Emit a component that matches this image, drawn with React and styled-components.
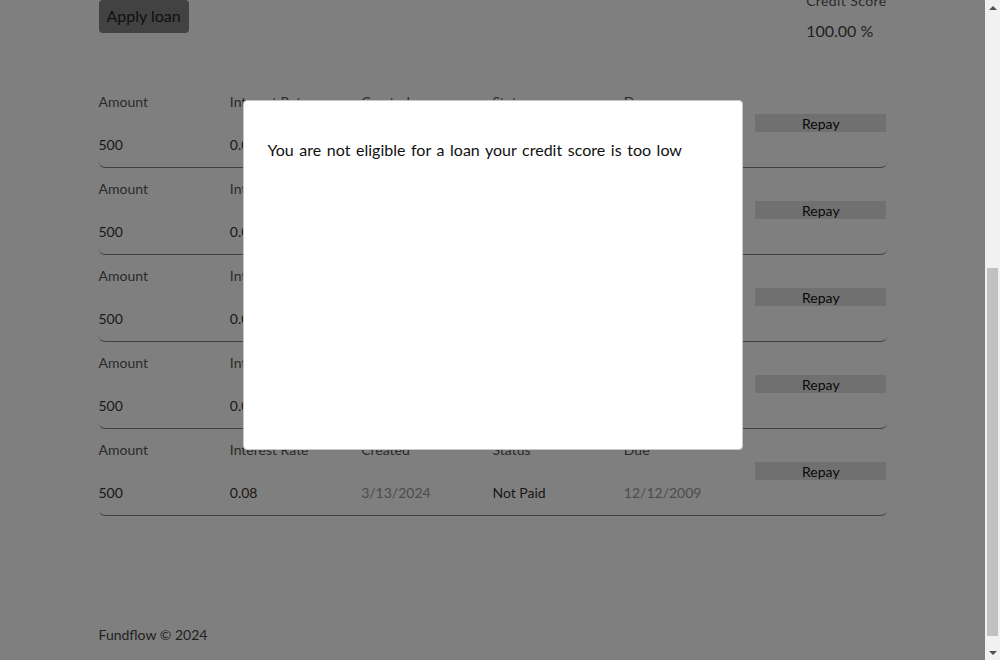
import { useEffect } from "react";
import styled, { createGlobalStyle } from "styled-components";

const loans = [
  { amount: 500, rate: 0.08, created: "3/13/2024", status: "Not Paid", due: "12/12/2009" },
  { amount: 500, rate: 0.08, created: "3/13/2024", status: "Not Paid", due: "12/12/2009" },
  { amount: 500, rate: 0.08, created: "3/13/2024", status: "Not Paid", due: "12/12/2009" },
  { amount: 500, rate: 0.08, created: "3/13/2024", status: "Not Paid", due: "12/12/2009" },
  { amount: 500, rate: 0.08, created: "3/13/2024", status: "Not Paid", due: "12/12/2009" },
];

const GlobalStyle = createGlobalStyle`
  html, body {
    margin: 0;
    padding: 0;
    background: #fff;
    font-family: Lato, "Open Sans", sans-serif;
    color: #333;
  }
  * { box-sizing: border-box; }
`;

export default function App() {
  useEffect(() => {
    window.scrollTo(0, document.documentElement.scrollHeight);
  }, []);

  return (
    <>
      <GlobalStyle />
      <Page>
        <Nav>
          <Brand>Fundflow</Brand>
          <NavLinks>
            <span>Dashboard</span>
            <span>Loans</span>
            <span>Profile</span>
            <span>Log out</span>
          </NavLinks>
        </Nav>
        <Main>
          <Welcome>
            <h1>Welcome back</h1>
            <p>Here is an overview of your loans and your credit score.</p>
          </Welcome>
          <TopBar>
            <ApplyButton>Apply loan</ApplyButton>
            <Stat>
              <StatLabel>Credit Score</StatLabel>
              <StatValue>100.00 %</StatValue>
            </Stat>
          </TopBar>
          <LoanList>
            {loans.map((loan, index) => (
              <LoanRow key={index}>
                <Cell>
                  <Label>Amount</Label>
                  <Value>{loan.amount}</Value>
                </Cell>
                <Cell>
                  <Label>Interest Rate</Label>
                  <Value>{loan.rate}</Value>
                </Cell>
                <Cell>
                  <Label>Created</Label>
                  <Value $muted>{loan.created}</Value>
                </Cell>
                <Cell>
                  <Label>Status</Label>
                  <Value>{loan.status}</Value>
                </Cell>
                <Cell>
                  <Label>Due</Label>
                  <Value $muted>{loan.due}</Value>
                </Cell>
                <RepayButton>Repay</RepayButton>
              </LoanRow>
            ))}
          </LoanList>
        </Main>
        <Footer>Fundflow © 2024</Footer>
      </Page>
      <Overlay>
        <Modal>
          <p>You are not eligible for a loan your credit score is too low</p>
        </Modal>
      </Overlay>
      <ScrollTrack>
        <Arrow $up />
        <ThumbArea>
          <Thumb />
        </ThumbArea>
        <Arrow />
      </ScrollTrack>
    </>
  );
}

const Page = styled.div`
  padding-right: 15px;
`;

const Nav = styled.nav`
  height: 64px;
  width: 80%;
  margin: 0 auto;
  display: flex;
  align-items: center;
  justify-content: space-between;
`;

const Brand = styled.div`
  font-size: 22px;
  font-weight: 700;
  color: #222;
`;

const NavLinks = styled.div`
  display: flex;
  gap: 24px;
  font-size: 14px;
  color: #555;
`;

const Main = styled.main`
  width: 80%;
  margin: 0 auto;
`;

const Welcome = styled.section`
  padding: 60px 0 200px;
  & h1 {
    margin: 0 0 12px;
    font-size: 32px;
    font-weight: 400;
    color: #222;
  }
  & p {
    margin: 0;
    font-size: 16px;
    color: #666;
  }
`;

const TopBar = styled.div`
  display: flex;
  justify-content: space-between;
  align-items: flex-start;
`;

const ApplyButton = styled.button`
  margin-top: 8px;
  height: 33px;
  padding: 0 8px 2px;
  border: none;
  border-radius: 4px;
  background: #848484;
  color: #222;
  font-family: inherit;
  font-size: 16px;
  cursor: pointer;
`;

const Stat = styled.div`
  display: flex;
  flex-direction: column;
`;

const StatLabel = styled.span`
  font-size: 14px;
  line-height: 17px;
  letter-spacing: 0.4px;
  color: #555;
  margin-bottom: 12px;
`;

const StatValue = styled.span`
  font-size: 16px;
  line-height: 19px;
  color: #444;
`;

const LoanList = styled.div`
  margin-top: 41px;
  display: flex;
  flex-direction: column;
`;

const LoanRow = styled.div`
  display: grid;
  grid-template-columns: repeat(6, 1fr);
  align-items: center;
  padding: 12px 0 14px;
  border-bottom: 1px solid #808080;
  border-radius: 6px;
`;

const Cell = styled.div`
  display: flex;
  flex-direction: column;
  gap: 26px;
`;

const Label = styled.span`
  font-size: 14px;
  line-height: 17px;
  color: #555;
`;

const Value = styled.span`
  font-size: 14px;
  line-height: 17px;
  color: ${(p) => (p.$muted ? "#999" : "#333")};
`;

const RepayButton = styled.button`
  height: 18px;
  padding: 0;
  border: none;
  background: #e0e0e0;
  color: #111;
  font-family: inherit;
  font-size: 14px;
  cursor: pointer;
`;

const Footer = styled.footer`
  width: 80%;
  margin: 110px auto 0;
  padding-bottom: 17px;
  font-size: 14px;
  line-height: 17px;
  color: #444;
`;

const Overlay = styled.div`
  position: fixed;
  top: 0;
  left: 0;
  bottom: 0;
  right: 15px;
  background: rgba(0, 0, 0, 0.5);
  display: flex;
  justify-content: center;
  align-items: flex-start;
  padding-top: 100px;
`;

const Modal = styled.div`
  width: 500px;
  height: 350px;
  background: #fff;
  border: 1px solid #c8c8c8;
  border-radius: 4px;
  padding: 39px 24px;
  & p {
    margin: 0;
    font-size: 16px;
    line-height: 19px;
    word-spacing: 1.5px;
    color: #111;
  }
`;

const ScrollTrack = styled.div`
  position: fixed;
  top: 0;
  right: 0;
  bottom: 0;
  width: 15px;
  background: #f1f1f1;
  display: flex;
  flex-direction: column;
`;

const Arrow = styled.div`
  height: 15px;
  display: flex;
  align-items: center;
  justify-content: center;
  &::before {
    content: "";
    border-left: 4px solid transparent;
    border-right: 4px solid transparent;
    ${(p) =>
      p.$up ? "border-bottom: 4px solid #505050;" : "border-top: 4px solid #505050;"}
  }
`;

const ThumbArea = styled.div`
  flex: 1;
  display: flex;
  flex-direction: column;
  justify-content: flex-end;
  padding: 0 2px 9px;
`;

const Thumb = styled.div`
  height: 368px;
  background: #c1c1c1;
`;
